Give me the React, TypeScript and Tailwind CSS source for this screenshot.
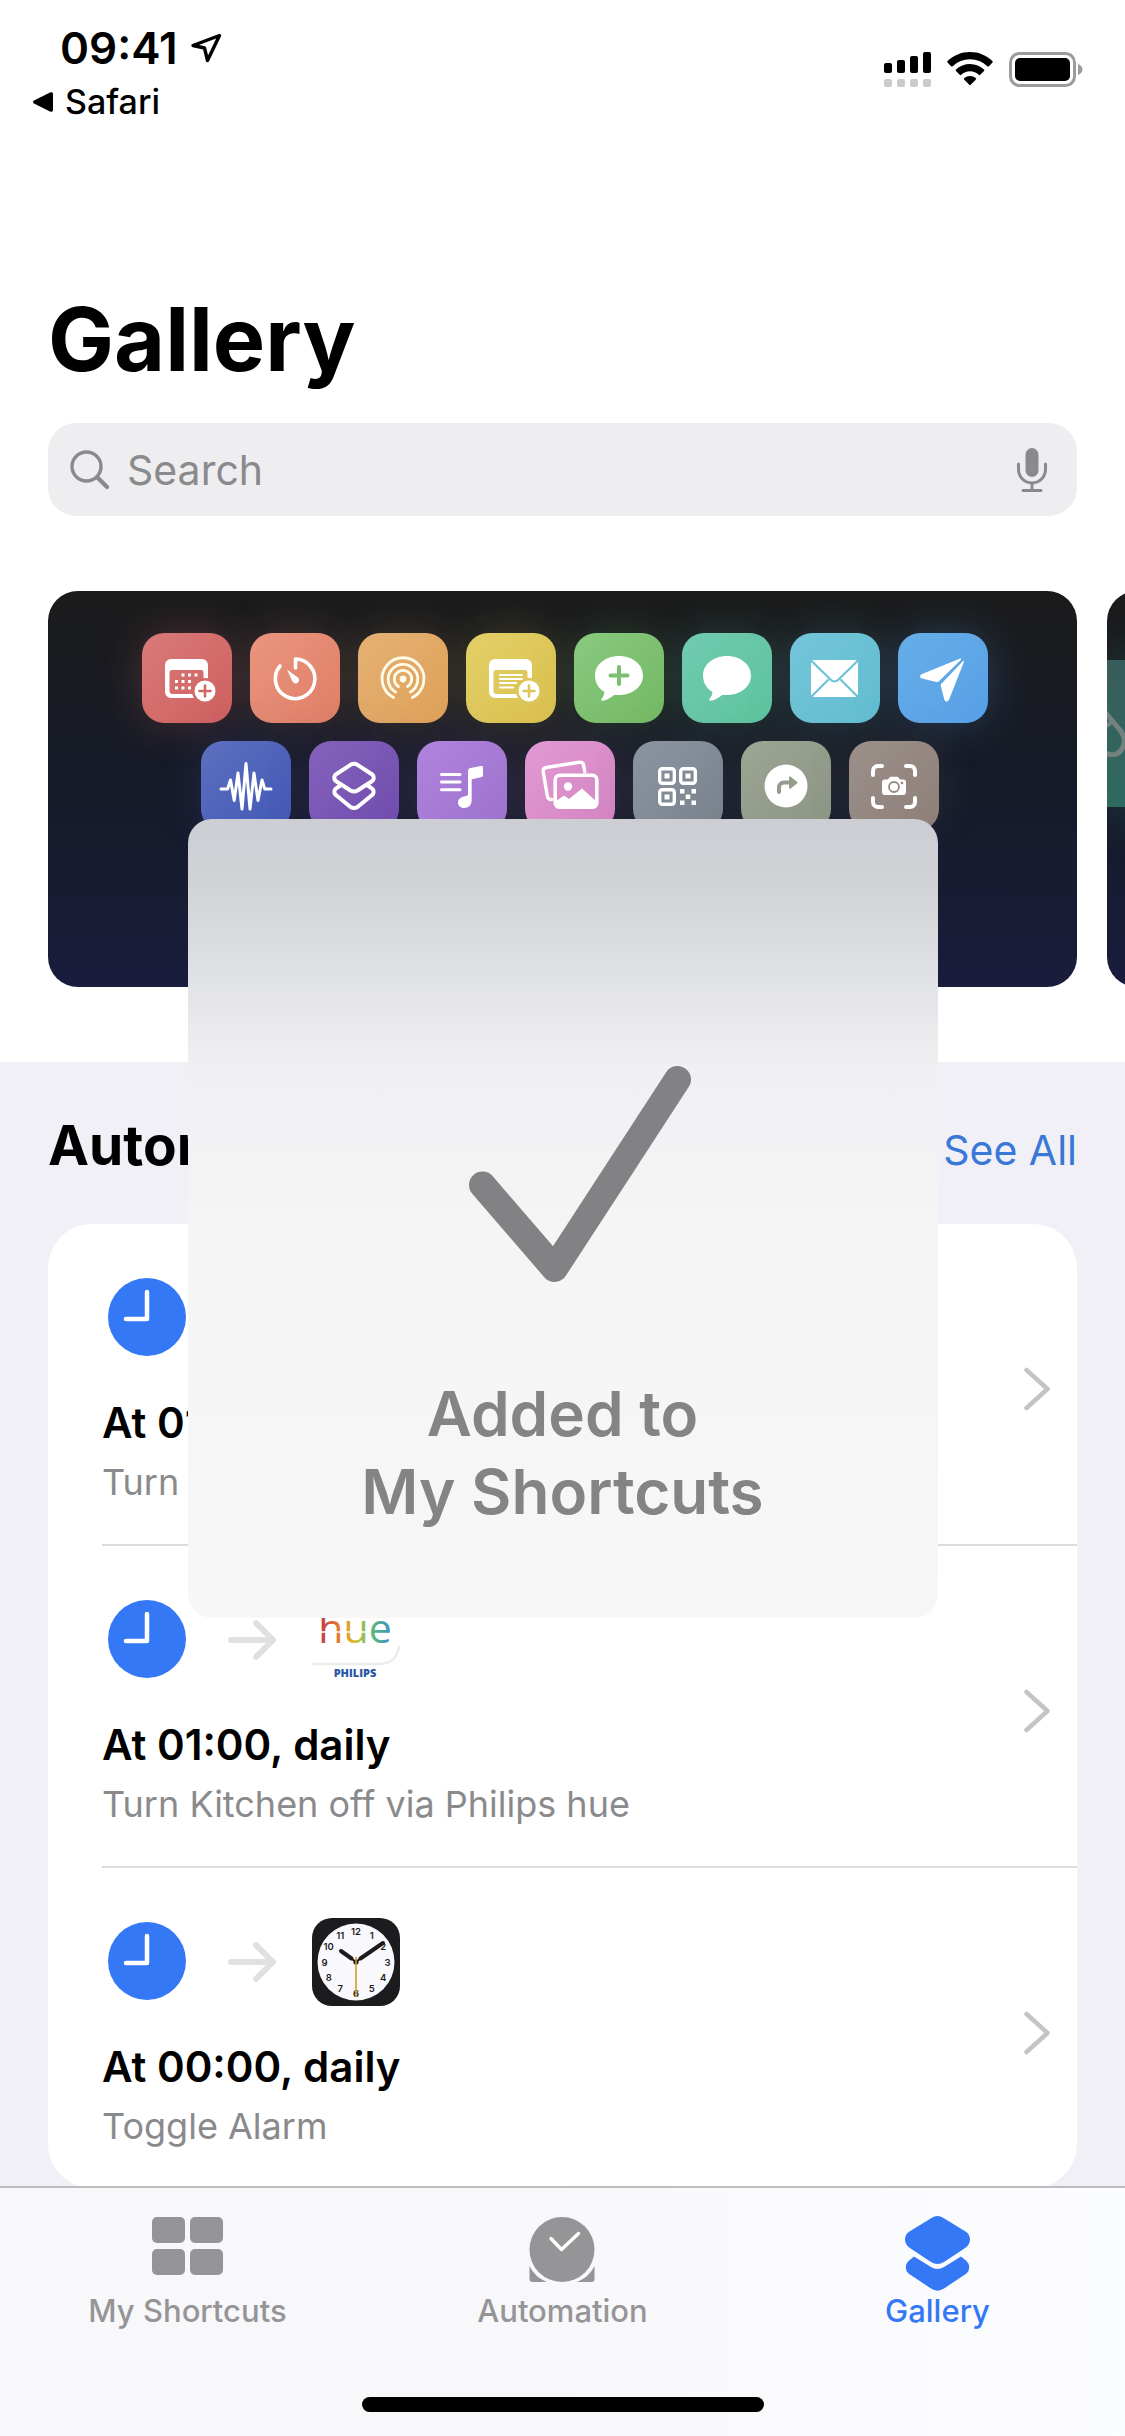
import type { ReactNode } from "react";

type Tile = { name: string; bg: string; icon: ReactNode };

const PlusBadge = ({ color }: { color: string }) => (
  <g>
    <circle cx="63" cy="58" r="13" fill={color} />
    <circle cx="63" cy="58" r="10.5" />
    <path d="M63 52.5v11M57.5 58h11" stroke={color} strokeWidth="2.6" strokeLinecap="round" />
  </g>
);

const windowPath =
  "M29 26h31a6 6 0 0 1 6 6v27a6 6 0 0 1-6 6H29a6 6 0 0 1-6-6V32a6 6 0 0 1 6-6zm1 11a2.5 2.5 0 0 0-2.5 2.5V58a3 3 0 0 0 3 3h28a3 3 0 0 0 3-3V39.5a2.5 2.5 0 0 0-2.5-2.5z";

const bubblePath =
  "M45 23c13.5 0 24 8.5 24 19.5S58.5 62 45 62c-1.500 0-3 0-4.500-.3C37 64.500 33 67 29 67.800c-1.600.3-2.300-1-1.300-2.200 1.600-1.900 2.600-4 2.800-6.600C24.500 55.600 21 49.500 21 42.500 21 31.500 31.500 23 45 23z";

const topRow: Tile[] = [
  {
    name: "Add event",
    bg: "bg-linear-to-br from-[#d87a7a] to-[#ce605e] shadow-[0_0_44px_rgba(208,98,96,0.28)]",
    icon: (
      <g>
        <path fillRule="evenodd" d={windowPath} />
        {[
          [41, 42], [47.5, 42], [54, 42],
          [34.5, 48.5], [41, 48.5], [47.5, 48.5],
          [34.5, 55], [41, 55], [47.5, 55],
        ].map(([x, y]) => (
          <rect key={`${x}-${y}`} x={x - 1.5} y={y - 1.5} width="3" height="3" />
        ))}
        <PlusBadge color="#cf6866" />
      </g>
    ),
  },
  {
    name: "Timer",
    bg: "bg-linear-to-br from-[#ea957f] to-[#df7f66] shadow-[0_0_44px_rgba(224,130,104,0.22)]",
    icon: (
      <g>
        <path
          d="M45.5 35V26a19.8 19.8 0 1 1-15.5 7"
          fill="none"
          stroke="#fff"
          strokeWidth="3.6"
          strokeLinecap="round"
          strokeLinejoin="round"
        />
        <path d="M37 36.5l9.8 7.2a3.5 3.5 0 1 1-4.6 4.4z" />
      </g>
    ),
  },
  {
    name: "AirDrop",
    bg: "bg-linear-to-br from-[#e5b174] to-[#dea158] shadow-[0_0_44px_rgba(222,164,96,0.2)]",
    icon: (
      <g fill="none" stroke="#fffbe8" strokeWidth="2.8" strokeLinecap="round">
        <circle cx="45" cy="46" r="3.4" fill="#fffbe8" stroke="none" />
        <path d="M40.5 53.5a8.7 8.7 0 1 1 9 0" />
        <path d="M37.5 59a14.8 14.8 0 1 1 15 0" />
        <path d="M35.5 64.5a21 21 0 1 1 19 0" />
      </g>
    ),
  },
  {
    name: "Add note",
    bg: "bg-linear-to-br from-[#e3d068] to-[#dac04c] shadow-[0_0_44px_rgba(218,196,80,0.2)]",
    icon: (
      <g>
        <path fillRule="evenodd" d={windowPath} />
        <path d="M34 42h22M34 46h22M34 50h16M34 54.5h13" stroke="#fff" strokeWidth="2.2" strokeLinecap="round" />
        <PlusBadge color="#dcc65a" />
      </g>
    ),
  },
  {
    name: "New message",
    bg: "bg-linear-to-br from-[#88c97f] to-[#74b963] shadow-[0_0_44px_rgba(116,188,100,0.22)]",
    icon: (
      <g>
        <path d={bubblePath} />
        <path d="M45 34v17M36.5 42.5h17" stroke="#7cc06f" strokeWidth="4" strokeLinecap="round" />
      </g>
    ),
  },
  {
    name: "Message",
    bg: "bg-linear-to-br from-[#70cbb0] to-[#5ec39d] shadow-[0_0_44px_rgba(96,196,160,0.22)]",
    icon: <path d={bubblePath} />,
  },
  {
    name: "Mail",
    bg: "bg-linear-to-br from-[#73c5da] to-[#63bdd0] shadow-[0_0_44px_rgba(100,190,210,0.22)]",
    icon: (
      <g>
        <rect x="21" y="27" width="47" height="37" rx="3" />
        <path
          d="M21 27.5l20 19.5a5 5 0 0 0 7 0l20-19.5M21.5 63.5l17-17M67.5 63.5l-17-17"
          fill="none"
          stroke="#6cc2d6"
          strokeWidth="2.2"
        />
      </g>
    ),
  },
  {
    name: "Send",
    bg: "bg-linear-to-br from-[#66aee8] to-[#579fe6] shadow-[0_0_44px_rgba(84,160,232,0.26)]",
    icon: (
      <g>
        <path d="M62.8 25.2L24 41c-2.4 1-2.4 3.8 0 4.500L38.500 49c1 .2 1.700 0 2.400-.7L62.800 27z" />
        <path d="M65.5 27.4L43.6 50.5c-.8.8-1 1.6-.8 2.600L46.300 66.500c.7 2.600 3.700 2.600 4.700.2l15-38z" />
      </g>
    ),
  },
];

const corners = "M24 34v-4a5 5 0 0 1 5-5h4M57 25h4a5 5 0 0 1 5 5v4M66 57v4a5 5 0 0 1-5 5h-4M33 66h-4a5 5 0 0 1-5-5v-4";

const bottomRow: Tile[] = [
  {
    name: "Audio",
    bg: "bg-linear-to-br from-[#5d70bf] to-[#4257b5] shadow-[0_0_44px_rgba(70,92,184,0.2)]",
    icon: (
      <path
        d="M20 48h6.5l3-9 3.7 20.5L37 32l4 36 4-45.5L49 68l4-36 4 27.5L61 39l2.8 9H70"
        fill="none"
        stroke="#fff"
        strokeWidth="3"
        strokeLinejoin="round"
        strokeLinecap="round"
      />
    ),
  },
  {
    name: "Shortcuts",
    bg: "bg-linear-to-br from-[#8563bb] to-[#6f4bae] shadow-[0_0_44px_rgba(116,80,178,0.18)]",
    icon: (
      <g fill="none" stroke="#fff" strokeWidth="4" strokeLinejoin="round">
        <path d="M41.5 23.8a7 7 0 0 1 7 0L62.500 33a4.300 4.300 0 0 1 0 7.500L48.500 49.500a7 7 0 0 1-7 0L27.500 40.500a4.300 4.300 0 0 1 0-7.500z" />
        <path d="M31.5 44.500l-4 2.600a4.300 4.300 0 0 0 0 7.400L41.500 66a7 7 0 0 0 7 0l14-11.500a4.300 4.300 0 0 0 0-7.400l-4-2.600" />
      </g>
    ),
  },
  {
    name: "Playlist",
    bg: "bg-linear-to-br from-[#b083de] to-[#9c72cc] shadow-[0_0_44px_rgba(160,116,208,0.18)]",
    icon: (
      <g>
        <path d="M24.5 33.5H43M24.5 41H43M24.5 48.7H43" stroke="#fff" strokeWidth="3" strokeLinecap="round" />
        <path d="M51 30c0-1.600 1-2.700 2.500-3L64 25c1.300-.2 2 .5 2 1.600V34c0 1.300-.7 2-2 2.300l-9.300 2V59c0 5-3.200 8-7.700 8-3.500 0-6-2.400-6-5.500s2.500-5.300 6-6l2-.4c1.400-.3 2-1 2-2.400z" />
      </g>
    ),
  },
  {
    name: "Photos",
    bg: "bg-linear-to-br from-[#e29ad4] to-[#d283c0] shadow-[0_0_44px_rgba(214,136,196,0.16)]",
    icon: (
      <g>
        <path
          d="M26.5 58.5c-2 .3-3.700-.8-4-2.800L18.200 31c-.4-2.400.8-4 3-4.500l33-5.300c2.300-.4 4 .8 4.400 3l1.200 6.500"
          fill="none"
          stroke="#fff"
          strokeWidth="3.4"
          strokeLinecap="round"
        />
        <rect x="30.2" y="34.2" width="41.6" height="32" rx="4.5" fill="none" stroke="#fff" strokeWidth="3.6" />
        <circle cx="43" cy="45.5" r="4.2" />
        <path d="M31 60l8-5.500 5 3.500L57 47.500 71 60v4a3 3 0 0 1-3 3H34a3 3 0 0 1-3-3z" />
      </g>
    ),
  },
  {
    name: "QR code",
    bg: "bg-linear-to-br from-[#8b95a1] to-[#79818b] shadow-[0_0_44px_rgba(126,136,148,0.14)]",
    icon: (
      <g>
        {[
          [25, 26],
          [46, 26],
          [25, 47],
        ].map(([x, y]) => (
          <g key={`${x}-${y}`}>
            <rect x={x + 1.7} y={y + 1.7} width="14.6" height="14.6" rx="2.5" fill="none" stroke="#fff" strokeWidth="3.4" />
            <rect x={x + 6.5} y={y + 6.5} width="5" height="5" />
          </g>
        ))}
        <path d="M47 48h4.500v4.500H47zM58.500 48H63v4.500h-4.500zM52.700 53.500h4.600V58h-4.600zM47 59.500h4.500V64H47zM58.500 59.500H63V64h-4.500z" />
      </g>
    ),
  },
  {
    name: "Directions",
    bg: "bg-linear-to-br from-[#9da595] to-[#8c9484] shadow-[0_0_44px_rgba(146,154,136,0.14)]",
    icon: (
      <g>
        <circle cx="45" cy="45" r="21.5" />
        <path d="M38 51v-4.500a5 5 0 0 1 5-5h6" fill="none" stroke="#959d8e" strokeWidth="4" strokeLinecap="round" />
        <path d="M48 36.500c0-1 1-1.400 1.700-.8l6.300 5c.6.500.6 1.200 0 1.700l-6.300 5c-.7.600-1.700.2-1.700-.8z" fill="#959d8e" />
      </g>
    ),
  },
  {
    name: "Scan",
    bg: "bg-linear-to-br from-[#9b908b] to-[#8e7f78] shadow-[0_0_44px_rgba(150,134,126,0.14)]",
    icon: (
      <g>
        <path d={corners} fill="none" stroke="#fff" strokeWidth="4" strokeLinecap="round" />
        <path d="M36 38.500h3l1.500-2c.4-.5.800-.7 1.500-.7h6c.7 0 1.100.2 1.500.7l1.500 2h3a3 3 0 0 1 3 3V51a3 3 0 0 1-3 3H36a3 3 0 0 1-3-3v-9.500a3 3 0 0 1 3-3z" />
        <circle cx="45" cy="46" r="5" fill="none" stroke="#96897f" strokeWidth="1.8" />
        <circle cx="53" cy="42" r="1.3" fill="#96897f" />
      </g>
    ),
  },
];

function ShortcutTile({ tile }: { tile: Tile }) {
  return (
    <div className={`size-[90px] shrink-0 rounded-[22px] ${tile.bg}`}>
      <svg viewBox="0 0 90 90" fill="#fff" className="size-full" role="img" aria-label={tile.name}>
        {tile.icon}
      </svg>
    </div>
  );
}

function StatusBar() {
  return (
    <header className="flex justify-between pt-6 pr-[42px] pl-8">
      <div>
        <div className="flex items-center gap-3 pl-7">
          <time className="text-[44px] leading-[48px] font-semibold">09:41</time>
          <svg viewBox="0 0 32 30" className="h-[30px] w-8" aria-hidden="true">
            <path d="M29.5 2.5L3 12.5 14.5 15 17.5 27.500z" fill="none" stroke="#000" strokeWidth="3.4" strokeLinejoin="round" />
          </svg>
        </div>
        <button type="button" className="mt-[10px] flex items-center gap-3 text-[34px] leading-10 font-medium">
          <svg viewBox="0 0 21 20" className="h-5 w-[21px]" aria-hidden="true">
            <path d="M18 0.500L2 8.500a1.700 1.700 0 0 0 0 3L18 19.500c1.500.7 3 0 3-1.500V2c0-1.500-1.500-2.200-3-1.500z" />
          </svg>
          Safari
        </button>
      </div>
      <div className="flex items-start gap-4 pt-7">
        <svg viewBox="0 0 48 36" className="h-9 w-12" aria-label="Signal">
          <rect x="1" y="11" width="8" height="10" rx="2" />
          <rect x="14" y="8" width="8" height="13" rx="2" />
          <rect x="27" y="4" width="8" height="17" rx="2" />
          <rect x="40" y="0" width="8" height="21" rx="2" />
          <g fill="#cbcbcb">
            <rect x="1" y="27" width="8" height="8" rx="2" />
            <rect x="14" y="27" width="8" height="8" rx="2" />
            <rect x="27" y="27" width="8" height="8" rx="2" />
            <rect x="40" y="27" width="8" height="8" rx="2" />
          </g>
        </svg>
        <svg viewBox="0 0 46 34" className="h-[34px] w-[46px]" aria-label="Wi-Fi">
          <path d="M23 0c8.700 0 16.600 3.400 22.400 8.900.5.500.5 1.100.1 1.600l-3.600 3.700c-.5.500-1.100.5-1.600 0A25 25 0 0 0 23 7.300a25 25 0 0 0-17.300 6.900c-.5.500-1.100.5-1.600 0L.5 10.500c-.4-.5-.4-1.100.1-1.600C6.400 3.400 14.300 0 23 0z" />
          <path d="M23 12c5.400 0 10.300 2.100 14 5.500.5.500.5 1.100 0 1.600l-3.700 3.700c-.4.500-1 .5-1.500 0A13 13 0 0 0 23 19.300a13 13 0 0 0-8.800 3.500c-.5.500-1.100.5-1.500 0L9 19.100c-.5-.5-.5-1.100 0-1.600A20.600 20.600 0 0 1 23 12z" />
          <path d="M23 24c2.200 0 4.200.8 5.700 2.100.5.500.5 1.100 0 1.600l-5 5.100c-.4.500-1 .5-1.400 0l-5-5.100c-.5-.5-.5-1.100 0-1.600A8.600 8.600 0 0 1 23 24z" />
        </svg>
        <svg viewBox="0 0 74 35" className="h-[35px] w-[74px]" aria-label="Battery">
          <rect x="1.5" y="1.5" width="64" height="32" rx="9" fill="none" stroke="#9c9c9c" strokeWidth="3" />
          <rect x="6" y="6" width="55" height="23" rx="5" />
          <path d="M69 12v11c2.800-1 4.500-3 4.500-5.500S71.800 13 69 12z" fill="#9c9c9c" />
        </svg>
      </div>
    </header>
  );
}

function SearchBar() {
  return (
    <div className="mx-12 mt-[30px] flex h-[93px] items-center rounded-[28px] bg-[#eeeef0] pr-7 pl-[22px] text-[#8a8a8d]">
      <svg viewBox="0 0 40 40" className="size-10" fill="none" stroke="currentColor" strokeLinecap="round" aria-hidden="true">
        <circle cx="16.5" cy="16.5" r="14.5" strokeWidth="3.4" />
        <path d="M27.5 27.5L37 37" strokeWidth="4.2" />
      </svg>
      <input
        type="search"
        aria-label="Search"
        placeholder="Search"
        className="ml-[17px] min-w-0 flex-1 bg-transparent text-[41px] leading-[52px] outline-none placeholder:text-[#8a8a8d]"
      />
      <button type="button" aria-label="Dictate">
        <svg viewBox="0 0 34 46" className="h-[46px] w-[34px]" fill="none" stroke="currentColor" strokeLinecap="round">
          <rect x="10.5" y="1" width="13" height="29" rx="6.5" fill="currentColor" stroke="none" />
          <path d="M3.5 17v5.500a13.500 13.500 0 0 0 27 0V17M17 36v7M8 43.500h18" strokeWidth="3" />
        </svg>
      </button>
    </div>
  );
}

function Carousel() {
  return (
    <div className="mt-[75px] flex gap-[30px] overflow-hidden px-12">
      <a
        href="#starter"
        aria-label="Starter shortcuts"
        className="flex h-[396px] w-full shrink-0 flex-col items-center gap-[18px] overflow-hidden rounded-[30px] bg-linear-to-b from-[#1b1b1b] via-[#161b29] to-[#191c3c] pt-[42px] pl-1"
      >
        <div className="flex gap-[18px]">
          {topRow.map((tile) => (
            <ShortcutTile key={tile.name} tile={tile} />
          ))}
        </div>
        <div className="flex gap-[18px] pl-[10px]">
          {bottomRow.map((tile) => (
            <ShortcutTile key={tile.name} tile={tile} />
          ))}
        </div>
      </a>
      <a
        href="#next"
        aria-label="Next collection"
        className="h-[396px] w-full shrink-0 overflow-hidden rounded-[30px] bg-linear-to-b from-[#1b1b1b] via-[#161b29] to-[#191c3c] pt-[69px]"
      >
        <div className="h-[147px] bg-linear-to-b from-[#385c5b] to-[#2e6a60] pt-11 shadow-[0_0_50px_rgba(46,106,96,0.5)]">
          <svg viewBox="0 0 40 60" className="h-[60px] w-10" fill="none" stroke="#74827f" strokeWidth="5" strokeLinecap="round" aria-hidden="true">
            <path d="M-4 6L13 26c5 7 6 12 2 19-4 6-9 7-18 4M-4 22l6-2" />
          </svg>
        </div>
      </a>
    </div>
  );
}

function HueIcon() {
  return (
    <svg viewBox="0 0 88 88" className="size-[88px]" role="img" aria-label="Philips hue">
      <defs>
        <linearGradient id="hue" x1="0" x2="1" y1="0" y2="0">
          <stop offset="0" stopColor="#b5364a" />
          <stop offset="0.25" stopColor="#e0722f" />
          <stop offset="0.5" stopColor="#d9c02f" />
          <stop offset="0.72" stopColor="#5fba7d" />
          <stop offset="1" stopColor="#3f8fc4" />
        </linearGradient>
      </defs>
      <path d="M0 68h66c12 0 20-6 21-18" fill="none" stroke="#ececec" strokeWidth="2.5" />
      <text x="43" y="47" textAnchor="middle" fontFamily="Open Sans, sans-serif" fontSize="41" fill="url(#hue)">
        hue
      </text>
      <path d="M4 36h50" stroke="#fff" strokeWidth="1.5" />
      <text x="43" y="81" textAnchor="middle" fontFamily="Open Sans, sans-serif" fontWeight="800" fontSize="11" fill="#2a58a5">
        PHILIPS
      </text>
    </svg>
  );
}

function ClockAppIcon() {
  const numbers = [12, 1, 2, 3, 4, 5, 6, 7, 8, 9, 10, 11];
  return (
    <svg viewBox="0 0 88 88" className="size-[88px]" role="img" aria-label="Clock">
      <rect width="88" height="88" rx="20" fill="#1c1c1e" />
      <circle cx="44" cy="44" r="38.5" fill="#f9f9fc" />
      {numbers.map((n, i) => (
        <text
          key={n}
          x={44 + 31.5 * Math.sin((i * Math.PI) / 6)}
          y={47.5 - 31 * Math.cos((i * Math.PI) / 6)}
          textAnchor="middle"
          fontSize="9.5"
          fontWeight="600"
          fill="#1c1c1e"
        >
          {n}
        </text>
      ))}
      <path d="M44 44l-5-3.7M44 44l5-4" stroke="#1c1c1e" strokeWidth="2" />
      <path d="M39.5 40.5L29 33M48.5 40.5L71 25" stroke="#1c1c1e" strokeWidth="4" strokeLinecap="round" />
      <circle cx="44" cy="44" r="2.6" fill="#1c1c1e" />
      <path d="M44 39v40" stroke="#c9a227" strokeWidth="1.6" />
    </svg>
  );
}

const automations = [
  { id: 1, title: "At 01:00, daily", detail: "Turn Lights off", app: <HueIcon /> },
  { id: 2, title: "At 01:00, daily", detail: "Turn Kitchen off via Philips hue", app: <HueIcon /> },
  { id: 3, title: "At 00:00, daily", detail: "Toggle Alarm", app: <ClockAppIcon /> },
];

function AutomationList() {
  return (
    <section className="mt-[75px] flex-1 bg-[#f1f0f7] px-12 pt-[51px] pb-60">
      <div className="flex items-baseline justify-between">
        <h2 className="text-[55px] leading-[64px] font-bold">Automation Ideas</h2>
        <a href="#all" className="text-[41px] leading-[52px] text-[#3a78d8]">
          See All
        </a>
      </div>
      <ul className="mt-[47px] rounded-[44px] bg-white pl-[54px]">
        {automations.map(({ id, title, detail, app }) => (
          <li key={id} className="border-b-2 border-[#dcdcde] last:border-b-0">
            <a href={`#automation-${id}`} className="flex items-center justify-between pt-[50px] pr-[26px] pb-10">
              <div>
                <div className="flex h-[88px] items-center gap-9">
                  <svg viewBox="0 0 90 90" className="size-[90px]" aria-hidden="true">
                    <circle cx="45" cy="44" r="39" fill="#3478f6" />
                    <path d="M45 19v27H24" fill="none" stroke="#fff" strokeWidth="4.5" strokeLinecap="round" strokeLinejoin="round" />
                  </svg>
                  <svg viewBox="0 0 48 40" className="h-10 w-12" aria-hidden="true">
                    <path
                      d="M3 20h42M28 3l17 17-17 17"
                      fill="none"
                      stroke="#e0e0e0"
                      strokeWidth="6"
                      strokeLinecap="round"
                      strokeLinejoin="round"
                    />
                  </svg>
                  {app}
                </div>
                <h3 className="mt-[35px] text-[42px] leading-[52px] font-semibold">{title}</h3>
                <p className="mt-[11px] text-[36px] leading-[44px] text-[#8a8a8d]">{detail}</p>
              </div>
              <svg viewBox="0 0 27 44" className="h-11 w-[27px]" aria-hidden="true">
                <path d="M2.5 3l21 19-21 19" fill="none" stroke="#c4c4c6" strokeWidth="4.5" strokeLinecap="round" strokeLinejoin="round" />
              </svg>
            </a>
          </li>
        ))}
      </ul>
    </section>
  );
}

const tabs = [
  {
    label: "My Shortcuts",
    active: false,
    icon: (
      <g>
        <rect x="2" y="1" width="33" height="26" rx="5" />
        <rect x="40" y="1" width="33" height="26" rx="5" />
        <rect x="2" y="33" width="33" height="26" rx="5" />
        <rect x="40" y="33" width="33" height="26" rx="5" />
      </g>
    ),
  },
  {
    label: "Automation",
    active: false,
    icon: (
      <g>
        <circle cx="37" cy="33.5" r="32.5" />
        <path d="M26 22.5l10.500 11L53.500 17.500" fill="none" stroke="#fff" strokeWidth="3.4" strokeLinecap="round" strokeLinejoin="round" />
        <path d="M4.5 50c4 8 10 13 17.500 16H7.500a3 3 0 0 1-3-3zM69.500 50c-4 8-10 13-17.500 16h14.500a3 3 0 0 0 3-3z" />
      </g>
    ),
  },
  {
    label: "Gallery",
    active: true,
    icon: (
      <g>
        <path d="M14 40.500L8.500 45a8.500 8.500 0 0 0 0 12.500L31 72.500a11 11 0 0 0 13 0l22.500-15a8.500 8.500 0 0 0 0-12.500L61 40.500 44 51a13 13 0 0 1-13 0z" />
        <path d="M31.5 2a11 11 0 0 1 12 0l22 13.500c6 3.700 6 12.500 0 16.200L44 46a12 12 0 0 1-13 0L9.500 31.700c-6-3.700-6-12.500 0-16.200z" />
      </g>
    ),
  },
];

function TabBar() {
  return (
    <footer className="fixed inset-x-0 bottom-0 border-t-2 border-[#bdbdc0] bg-linear-to-r from-[#f8f8fa] via-[#f8f8fa] to-[#fcfdff] pt-7 pb-6">
      <nav className="grid grid-cols-3">
        {tabs.map(({ label, active, icon }) => (
          <button
            key={label}
            type="button"
            aria-current={active ? "page" : undefined}
            className={`flex flex-col items-center text-[31px] leading-[38px] font-medium ${active ? "text-[#3478f6]" : "text-[#959597]"}`}
          >
            <svg viewBox="0 0 75 76" className="h-[76px] w-[75px]" fill="currentColor" aria-hidden="true">
              {icon}
            </svg>
            {label}
          </button>
        ))}
      </nav>
      <div className="mx-auto mt-[67px] h-[15px] w-[402px] rounded-full bg-black" />
    </footer>
  );
}

function AddedToast() {
  return (
    <div className="pointer-events-none fixed inset-0 flex items-center justify-center">
      <div
        role="status"
        className="flex h-[799px] w-2/3 flex-col items-center rounded-[24px] bg-[linear-gradient(#cdced4_0%,#d1d2d6_8%,#d9dade_14%,#e2e3e7_21%,#ebebee_27%,#f0f0f2_31%,#f2f2f4_40%,#f5f5f6_52%,#f7f7f7_100%)] pt-[247px] text-center text-[#848484]"
      >
        {/* the tick's long arm hangs right of centre */}
        <svg viewBox="-34 0 256 216" className="h-[216px] w-64" aria-hidden="true">
          <path
            d="M13.5 119L85.5 202.500 208.500 13.500"
            fill="none"
            stroke="#828284"
            strokeWidth="27"
            strokeLinecap="round"
            strokeLinejoin="round"
          />
        </svg>
        <p className="mt-[93px] text-[62px] leading-[78px] font-semibold">
          Added to
          <br />
          My Shortcuts
        </p>
      </div>
    </div>
  );
}

export default function App() {
  return (
    <div className="flex min-h-screen flex-col bg-white font-[Inter,sans-serif] text-black">
      <StatusBar />
      <h1 className="mt-[163px] px-12 text-[88px] leading-[108px] font-bold">Gallery</h1>
      <SearchBar />
      <Carousel />
      <AutomationList />
      <TabBar />
      <AddedToast />
    </div>
  );
}
